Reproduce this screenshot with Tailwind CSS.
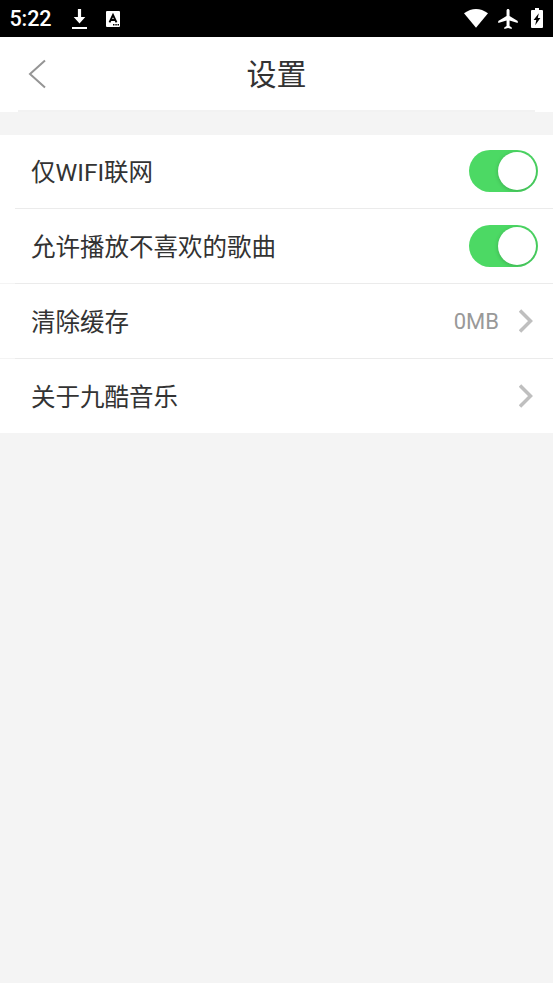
<!DOCTYPE html>
<html lang="zh-CN">
<head>
<meta charset="utf-8">
<title>设置</title>
<script src="https://cdn.jsdelivr.net/npm/@tailwindcss/browser@4"></script>
</head>
<body class="flex h-screen flex-col overflow-hidden bg-[#f4f4f4] font-[Roboto,'Noto_Sans_CJK_SC',sans-serif] text-[#333333]">
  <div class="flex h-[37px] shrink-0 items-center justify-between bg-black pl-[9.500px] pr-[10px] text-white">
    <div class="flex items-center">
      <span class="w-[61.500px] pt-px text-[21.500px] font-medium tracking-[-0.100px] leading-none">5:22</span>
      <svg class="h-[22px] w-[17px]" viewBox="0 0 17 22" fill="#fff"><path d="M6.900 1h3.200v8h4.200L8.500 15.500 2.700 9h4.200zM1 19h15v2H1z"/></svg>
      <svg class="ml-[18px] h-[16px] w-[14px]" viewBox="0 0 14 16"><rect width="14" height="16" rx="1" fill="#fff"/><path d="M3.500 11.300 7 4l3.500 7.300M4.800 9h4.400" fill="none" stroke="#000" stroke-width="1.900"/><path d="M7 13h1.500v1.500H7zM9.300 13h1.500v1.500H9.300zM11.500 13H13v1.500h-1.500z" fill="#000"/></svg>
    </div>
    <div class="flex items-center">
      <svg class="h-[19px] w-[24px]" viewBox="0 0 24 19" fill="#fff"><path d="M0 4.300Q12-4.200 24 4.300L12 18.800z"/></svg>
      <svg class="ml-[10px] h-[20px] w-[20px]" viewBox="2 2 19.500 20" fill="#fff"><path d="M21.500 16v-2l-8.200-5V3.500c0-.83-.67-1.500-1.500-1.500s-1.500.67-1.500 1.500V9L2 14v2l8.300-2.500V19L8 20.500V22l3.800-1 3.700 1v-1.500L13.300 19v-5.500z"/></svg>
      <svg class="-mt-px ml-[13px] h-[20px] w-[12px]" viewBox="0 0 12 20"><path d="M4 0h4v2h3q1 0 1 1v16q0 1-1 1H1q-1 0-1-1V3q0-1 1-1h3z" fill="#fff"/><path d="M7.800 5.200 2.600 12h2.700l-1.100 5.200L9.400 10H6.800z" fill="#000"/></svg>
    </div>
  </div>

  <header class="grid h-[75px] shrink-0 grid-cols-[100px_1fr_100px] grid-rows-[73px_2px] items-center bg-white">
    <svg class="ml-[28px] h-[30px] w-[19px]" viewBox="0 0 19 30" fill="none" stroke="#959595" stroke-width="2"><path d="M17 1.500 2 15l15 13.500"/></svg>
    <h1 class="pt-[3px] text-center text-[30px] leading-[44px]">设置</h1>
    <div></div>
    <div class="col-span-3 mx-[18px] h-[2px] bg-[#f2f2f2]"></div>
  </header>

  <main class="mt-[23px] bg-white text-[24.500px]">
    <div class="flex h-[74px] items-center justify-between pl-[31px] pr-[15px]">
      <span class="pt-[3px]">仅WIFI联网</span>
      <div class="mb-[2px] flex h-[42px] w-[69.500px] items-center justify-end overflow-hidden rounded-full bg-[#4cd964] pr-[2px]"><div class="size-[38px] rounded-full bg-white shadow-[0_1px_4px_#00000033]"></div></div>
    </div>
    <div class="ml-[15px] -mt-px h-px bg-[#ebebeb]"></div>
    <div class="flex h-[75px] items-center justify-between pl-[31px] pr-[15px]">
      <span class="pt-[3px]">允许播放不喜欢的歌曲</span>
      <div class="mb-[2px] flex h-[42px] w-[69.500px] items-center justify-end overflow-hidden rounded-full bg-[#4cd964] pr-[2px]"><div class="size-[38px] rounded-full bg-white shadow-[0_1px_4px_#00000033]"></div></div>
    </div>
    <div class="-mt-px flex h-px bg-[#ebebeb]"><div class="w-[15px] bg-[#f4f4f4]"></div></div>
    <div class="flex h-[75px] items-center justify-between pl-[31px] pr-[20px]">
      <span class="pt-[3px]">清除缓存</span>
      <div class="flex items-center gap-[20px]"><span class="text-[22px] text-[#999999]">0MB</span><svg class="mb-[2px] h-[24px] w-[14px]" viewBox="0 0 14 24" fill="none" stroke="#bfbfbf" stroke-width="3.500"><path d="M1 1.500 11.500 12 1 22.500"/></svg></div>
    </div>
    <div class="-mt-px flex h-px bg-[#ebebeb]"><div class="w-[15px] bg-[#f4f4f4]"></div></div>
    <div class="flex h-[74px] items-center justify-between pl-[31px] pr-[20px]">
      <span class="pt-[5px]">关于九酷音乐</span>
      <svg class="mb-px h-[24px] w-[14px]" viewBox="0 0 14 24" fill="none" stroke="#bfbfbf" stroke-width="3.500"><path d="M1 1.500 11.500 12 1 22.500"/></svg>
    </div>
  </main>
</body>
</html>
